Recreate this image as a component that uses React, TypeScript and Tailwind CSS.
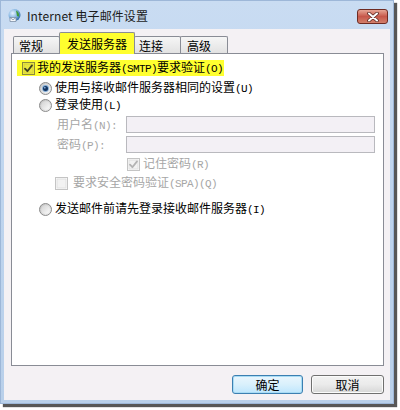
import React from "react";

const A = ({ children }: { children: React.ReactNode }) => (
  <span className="font-['Liberation_Mono',monospace] text-[11px] tracking-[-0.6px]">{children}</span>
);

const Radio = ({ checked }: { checked?: boolean }) => (
  <svg width="13" height="13" viewBox="0 0 13 13" className="shrink-0">
    <defs>
      <linearGradient id="radOut" x1="0" y1="0" x2="1" y2="1">
        <stop offset="0" stopColor="#bdbdbd" />
        <stop offset="1" stopColor="#f6f6f6" />
      </linearGradient>
      <linearGradient id="radIn" x1="0" y1="0" x2="1" y2="1">
        <stop offset="0" stopColor="#d2d2d2" />
        <stop offset="1" stopColor="#fbfbfb" />
      </linearGradient>
    </defs>
    <circle cx="6.5" cy="6.5" r="6" fill="url(#radOut)" stroke="#8c8c8c" strokeWidth="1" />
    <circle cx="6.5" cy="6.5" r="4.3" fill="url(#radIn)" />
    {checked && (
      <>
        <circle cx="6.5" cy="6.5" r="3.4" fill="#7eaad6" />
        <circle cx="6.5" cy="6.5" r="2.5" fill="#14335e" />
        <circle cx="5.8" cy="5.7" r="0.9" fill="#7fa9d6" />
      </>
    )}
  </svg>
);

const Check = ({
  checked,
  disabled,
  tint,
}: {
  checked?: boolean;
  disabled?: boolean;
  tint?: boolean;
}) => {
  const border = tint ? "#8c8a3e" : disabled ? "#c4c4c4" : "#8e8f8f";
  const inner = tint ? "#e9e640" : disabled ? "#f2f2f2" : "#eeeeee";
  const mark = tint ? "#3d3f22" : disabled ? "#b3b3b3" : "#333333";
  return (
    <svg width="13" height="13" viewBox="0 0 13 13" className="shrink-0">
      <rect x="0.5" y="0.5" width="12" height="12" fill={tint ? "#f6f43a" : "#ffffff"} stroke={border} />
      <rect x="2" y="2" width="9" height="9" fill={inner} stroke={tint ? "#d4d13a" : disabled ? "#e0e0e0" : "#d6d6d6"} strokeWidth="1" />
      {checked && (
        <path d="M3 6.6 L5.4 9.2 L10 3.4" fill="none" stroke={mark} strokeWidth="1.8" strokeLinejoin="round" strokeLinecap="round" />
      )}
    </svg>
  );
};

export default function App() {
  return (
    <div className="w-[400px] h-[410px] bg-white font-['Noto_Sans_CJK_SC',sans-serif] text-[12px] leading-none text-black whitespace-nowrap">
      <div className="w-[394px] h-[404px] flex flex-col border border-[#9db7d8] bg-gradient-to-b from-[#c9dcf2] via-[#bed4ee] to-[#b9d0ea] shadow-[3px_3px_1px_rgba(45,45,45,0.8)]">
        {/* Title bar */}
        <div className="h-[28px] flex items-start shrink-0">
          <div className="flex items-center pl-[6px] pt-[7px] gap-[6px]">
            <svg width="14" height="15" viewBox="0 0 14 15">
              <defs>
                <radialGradient id="globe" cx="0.35" cy="0.35" r="0.7">
                  <stop offset="0" stopColor="#e8f3ff" />
                  <stop offset="0.6" stopColor="#7fb2e0" />
                  <stop offset="1" stopColor="#2c6aa8" />
                </radialGradient>
              </defs>
              <circle cx="7.5" cy="7" r="6" fill="url(#globe)" />
              <path d="M9 2.5 C11.5 3.5 12.5 6 12 8.5 L10 8 L9.5 5 Z" fill="#3f9a3a" />
              <path d="M3 9.5 L3 13.5 L9 13.5 L9 9.5 Z" fill="#f4f7fb" stroke="#7d8fa6" strokeWidth="0.8" />
              <path d="M3 9.5 L6 11.8 L9 9.5" fill="none" stroke="#7d8fa6" strokeWidth="0.8" />
            </svg>
            <span className="text-[12px] text-[#1b1b1b] tracking-[0.1px]">Internet 电子邮件设置</span>
          </div>
          <div className="ml-auto mr-[5px] mt-[8px] w-[31px] h-[15px] rounded-[3px] border border-[#6e2b22] bg-gradient-to-b from-[#e6a595] via-[#c6574a] to-[#d27f6b] flex items-center justify-center">
            <svg width="12" height="10" viewBox="0 0 12 10">
              <path d="M2 1.5 L10 8.5 M10 1.5 L2 8.5" stroke="#5a2a24" strokeWidth="3.6" strokeLinecap="round" />
              <path d="M2 1.5 L10 8.5 M10 1.5 L2 8.5" stroke="#ffffff" strokeWidth="2" strokeLinecap="round" />
            </svg>
          </div>
        </div>

        {/* Client area */}
        <div className="flex-1 mx-[3px] mb-[3px] bg-[#f4f1f4] flex flex-col pl-[7px] pr-[6px] pt-[3px]">
          {/* Tabs */}
          <div className="flex items-end h-[21px] ml-[2px] relative z-10">
            <div className="w-[47px] h-[17px] border border-b-0 border-[#898c95] rounded-t-[2px] bg-gradient-to-b from-[#f6f6f6] to-[#e2e2e2] pl-[5px] pt-[3px]">
              常规
            </div>
            <div className="-ml-px w-[76px] h-[22px] mb-[-1px] border border-b-0 border-[#898c95] rounded-t-[2px] bg-[#ffff2e] flex justify-center pt-[5px]">
              发送服务器
            </div>
            <div className="-ml-px w-[47px] h-[17px] border border-b-0 border-[#898c95] rounded-t-[2px] bg-gradient-to-b from-[#f6f6f6] to-[#e2e2e2] pl-[4px] pt-[3px]">
              连接
            </div>
            <div className="-ml-px w-[48px] h-[17px] border border-b-0 border-[#898c95] rounded-t-[2px] bg-gradient-to-b from-[#f6f6f6] to-[#e2e2e2] pl-[6px] pt-[3px]">
              高级
            </div>
          </div>

          {/* Panel */}
          <div className="h-[313px] border border-[#898c95] bg-white flex flex-col">
            <div className="mt-[6px] ml-[5px] w-[207px] h-[16px] bg-[#ffff30] flex items-center pl-[5px] gap-[2px]">
              <Check checked tint />
              <span>我的发送服务器<A>(SMTP)</A>要求验证<A>(O)</A></span>
            </div>

            <div className="mt-[4px] ml-[27px] h-[16px] flex items-center gap-[3px]">
              <Radio checked />
              <span>使用与接收邮件服务器相同的设置<A>(U)</A></span>
            </div>

            <div className="mt-[1px] ml-[27px] h-[16px] flex items-center gap-[3px]">
              <Radio />
              <span>登录使用<A>(L)</A></span>
            </div>

            <div className="mt-[3px] ml-[45px] mr-[8px] h-[17px] flex items-center">
              <span className="w-[69px] shrink-0 text-[#a6a6a6]">用户名<A>(N):</A></span>
              <div className="flex-1 h-[17px] border border-[#b9b9be] bg-[#f3f0f5]" />
            </div>

            <div className="mt-[3px] ml-[45px] mr-[8px] h-[17px] flex items-center">
              <span className="w-[69px] shrink-0 text-[#a6a6a6]">密码<A>(P):</A></span>
              <div className="flex-1 h-[17px] border border-[#b9b9be] bg-[#f3f0f5]" />
            </div>

            <div className="mt-[3px] ml-[115px] h-[16px] flex items-center gap-[3px]">
              <Check checked disabled />
              <span className="text-[#a6a6a6]">记住密码<A>(R)</A></span>
            </div>

            <div className="mt-[3px] ml-[43px] h-[16px] flex items-center gap-[5px]">
              <Check disabled />
              <span className="text-[#a6a6a6]">要求安全密码验证<A>(SPA)(Q)</A></span>
            </div>

            <div className="mt-[10px] ml-[27px] h-[16px] flex items-center gap-[3px]">
              <Radio />
              <span>发送邮件前请先登录接收邮件服务器<A>(I)</A></span>
            </div>
          </div>

          {/* Buttons */}
          <div className="mt-[9px] flex justify-end gap-[8px]">
            <div className="w-[71px] h-[19px] rounded-[3px] border border-[#3c7fb1] bg-gradient-to-b from-[#eaf6fd] via-[#d9f0fc] to-[#bee6fd] shadow-[inset_0_0_0_1px_#a8dcf5] flex items-center justify-center">
              确定
            </div>
            <div className="w-[73px] h-[19px] rounded-[3px] border border-[#707070] bg-gradient-to-b from-[#f2f2f2] via-[#ebebeb] to-[#d6d6d6] shadow-[inset_0_0_0_1px_#fbfbfb] flex items-center justify-center">
              取消
            </div>
          </div>
        </div>
      </div>
    </div>
  );
}
